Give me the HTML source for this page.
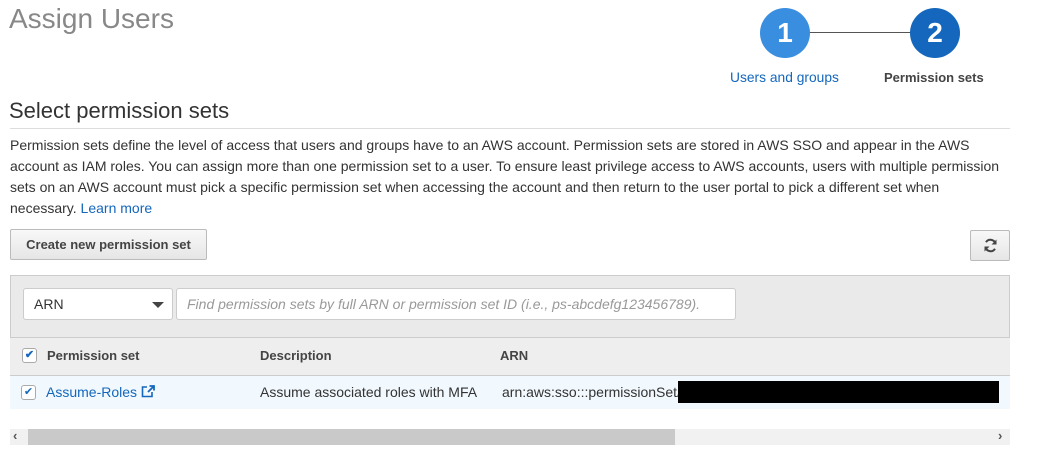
<!DOCTYPE html>
<html><head><style>
*{box-sizing:border-box;margin:0;padding:0}
body{width:1039px;height:463px;background:#fff;font-family:"Liberation Sans",sans-serif;color:#444;position:relative;overflow:hidden}
.a{position:absolute}
.circ{width:50px;height:50px;border-radius:50%;color:#fff;font-weight:bold;font-size:28px;text-align:center;line-height:50px}
</style></head><body>
<div class="a" style="left:9px;top:3px;font-size:28px;color:#888">Assign Users</div>
<div class="a" style="left:808px;top:32px;width:105px;height:1px;background:#555"></div>
<div class="a circ" style="left:760px;top:8px;background:#3a8ee0">1</div>
<div class="a circ" style="left:910px;top:8px;background:#1467bc">2</div>
<div class="a" style="left:730px;top:70px;font-size:13.8px;color:#1467bc">Users and groups</div>
<div class="a" style="left:884px;top:70px;font-size:13px;font-weight:bold;color:#444">Permission sets</div>
<div class="a" style="left:9px;top:98px;font-size:22px;color:#333">Select permission sets</div>
<div class="a" style="left:10px;top:128px;width:1000px;height:1px;background:#ddd"></div>
<div class="a" style="left:10px;top:135px;width:998px;font-size:14px;line-height:21px;color:#333">Permission sets define the level of access that users and groups have to an AWS account. Permission sets are stored in AWS SSO and appear in the AWS account as IAM roles. You can assign more than one permission set to a user. To ensure least privilege access to AWS accounts, users with multiple permission sets on an AWS account must pick a specific permission set when accessing the account and then return to the user portal to pick a different set when necessary. <span style="color:#1467bc">Learn more</span></div>
<div class="a" style="left:10px;top:229px;width:197px;height:31px;border:1px solid #bbb;border-radius:2px;background:linear-gradient(#f8f8f8,#e6e6e6);font-size:13px;font-weight:bold;line-height:29px;text-align:center;color:#444">Create new permission set</div>
<div class="a" style="left:970px;top:230px;width:40px;height:31px;border:1px solid #bbb;border-radius:2px;background:linear-gradient(#f8f8f8,#e6e6e6)"><svg class="a" style="left:12px;top:7px" width="15" height="15" viewBox="0 0 15 15"><path d="M12.5 6A5.2 5.2 0 0 0 3 4.2M2.5 9A5.2 5.2 0 0 0 12 10.8" fill="none" stroke="#444" stroke-width="2"/><path d="M13.5 1.5V6.5H8.5zM1.5 13.5V8.5H6.5z" fill="#444"/></svg></div>
<div class="a" style="left:10px;top:275px;width:1000px;height:134px;border:1px solid #ccc;border-bottom:none;background:#eaeaea"></div>
<div class="a" style="left:23px;top:288px;width:150px;height:32px;border:1px solid #ccc;border-radius:3px;background:#fff;font-size:14px;line-height:30px;padding-left:10px;color:#333">ARN<span class="a" style="left:128px;top:13px;border:6px solid transparent;border-top-color:#444;border-bottom:0"></span></div>
<div class="a" style="left:176px;top:288px;width:560px;height:32px;border:1px solid #ccc;border-radius:3px;background:#fff;font-size:14px;line-height:30px;padding-left:10px;color:#999;font-style:italic">Find permission sets by full ARN or permission set ID (i.e., ps-abcdefg123456789).</div>
<div class="a" style="left:10px;top:337px;width:1000px;height:39px;border-top:1px solid #ccc;border-bottom:1px solid #ccc;background:#eee;font-size:13px;font-weight:bold;color:#444">
<span class="a" style="left:12px;top:10px;width:15px;height:15px;border:1px solid #aaa;border-radius:3px;background:#fff;color:#1467bc;font-size:11px;line-height:13px;text-align:center">✔</span>
<span class="a" style="left:37px;top:10px">Permission set</span>
<span class="a" style="left:250px;top:10px">Description</span>
<span class="a" style="left:490px;top:10px">ARN</span></div>
<div class="a" style="left:10px;top:376px;width:1000px;height:33px;background:#f1f8fe;font-size:14px;color:#333">
<span class="a" style="left:11px;top:9px;width:15px;height:15px;border:1px solid #aaa;border-radius:3px;background:#fff;color:#1467bc;font-size:11px;line-height:13px;text-align:center">✔</span>
<span class="a" style="left:36px;top:8px;color:#1467bc">Assume-Roles <svg width="14" height="13" viewBox="0 0 14 13" style="vertical-align:-1px"><path d="M6 2H1.5v9.5H11V7" fill="none" stroke="#1467bc" stroke-width="1.6"/><path d="M7 7l6-6M8.5 1H13v4.5" fill="none" stroke="#1467bc" stroke-width="1.8"/></svg></span>
<span class="a" style="left:250px;top:8px">Assume associated roles with MFA</span>
<span class="a" style="left:492px;top:8px">arn:aws:sso:::permissionSet/</span>
<span class="a" style="left:668px;top:5px;width:321px;height:22px;background:#000"></span></div>
<div class="a" style="left:10px;top:429px;width:1000px;height:16px;background:#f1f1f1"></div>
<div class="a" style="left:28px;top:429px;width:647px;height:16px;background:#c9c9c9"></div>
<div class="a" style="left:13px;top:428px;font-size:13px;color:#555;font-weight:bold">‹</div>
<div class="a" style="left:998px;top:428px;font-size:13px;color:#555;font-weight:bold">›</div>
</body></html>
